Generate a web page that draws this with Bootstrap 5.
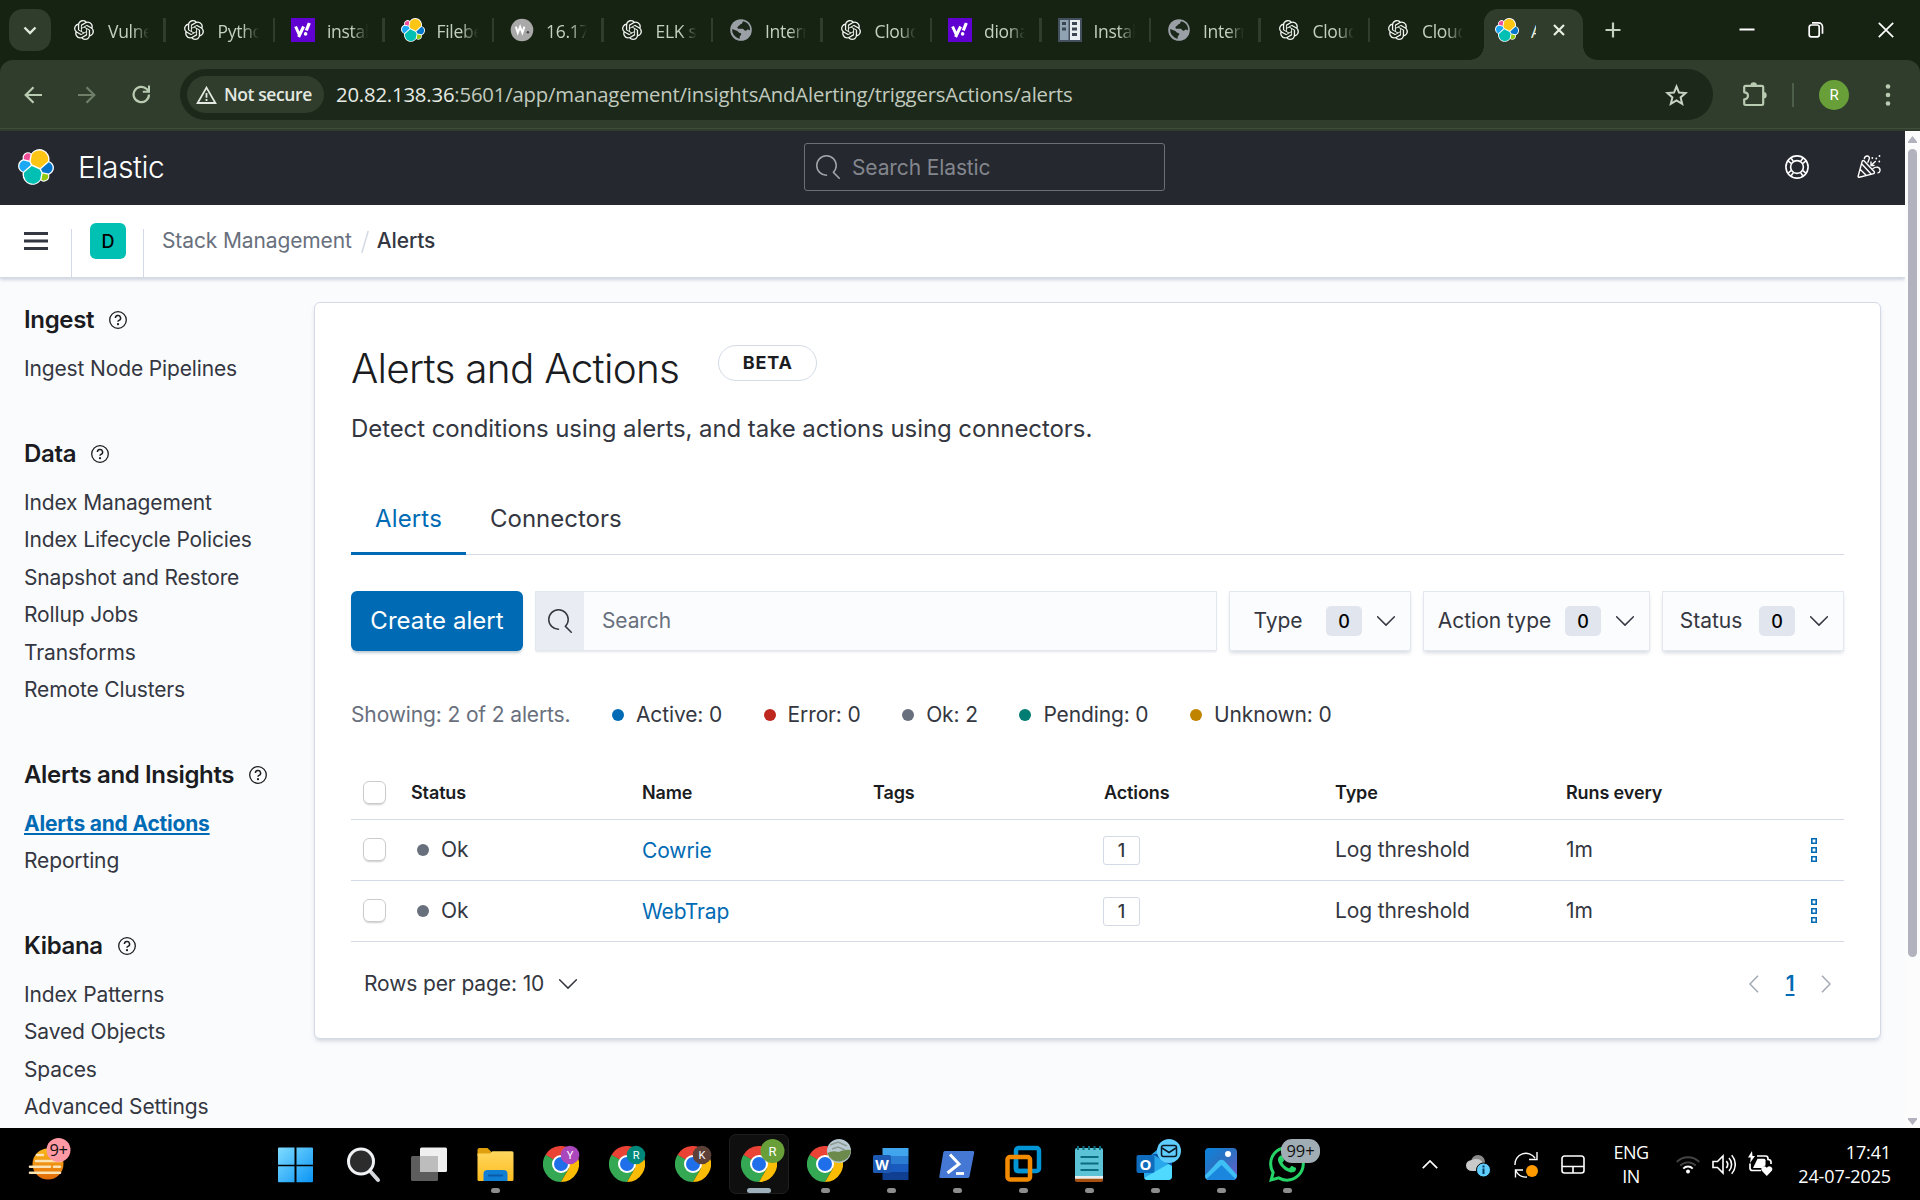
<!DOCTYPE html>
<html lang="en">
<head>
<meta charset="utf-8">
<title>Alerts - Elastic</title>
<link href="https://cdn.jsdelivr.net/npm/bootstrap@5.3.0/dist/css/bootstrap.min.css" rel="stylesheet">
<style>
body{font-family:Inter,sans-serif;font-size:21px;letter-spacing:-.12px;color:#343741;background:#000;width:1920px;height:1200px;overflow:hidden}
svg{display:block;flex:none}
.seg{font-family:"Open Sans","Noto Sans",sans-serif}
/* browser chrome */
.tabstrip{height:60px;background:#162313;padding-left:9px}
.tabmenu{width:42px;height:42px;border-radius:14px;background:#303d2d;margin-right:5px}
.btab{width:109.5px;height:60px;padding-left:16px;gap:12px}
.btab span{width:41px;font-size:17.5px;letter-spacing:-.3px;color:#c3d0bd;white-space:nowrap;overflow:hidden;padding-top:3px;-webkit-mask-image:linear-gradient(90deg,#000 60%,transparent);mask-image:linear-gradient(90deg,#000 60%,transparent)}
.tabsep{width:2.5px;height:24px;background:#303d2d;margin-left:auto}
.fav{width:24px;height:24px}
.atab{position:relative;width:99px;height:51px;margin:9px 0 0 4.5px;border-radius:14px 14px 0 0;background:#303d2d;padding:0 0 9px 11px}
.atab::before,.atab::after{content:"";position:absolute;bottom:0;width:14px;height:14px}
.atab::before{left:-14px;background:radial-gradient(circle at 0 0,transparent 13.5px,#303d2d 14px)}
.atab::after{right:-14px;background:radial-gradient(circle at 100% 0,transparent 13.5px,#303d2d 14px)}
.atab span{width:5px;overflow:hidden;color:#e6efe2;font-size:17.5px;margin-left:12px;padding-top:3px}
.newtab{margin-left:22px}
.wctl{padding-right:26.5px;gap:53.2px}
.toolbar{height:71px;background:#303d2d;border-radius:13px 13px 0 0;box-shadow:inset 0 -2px 0 #303d2d,inset 0 -3px 0 #404d3c;padding:9px 24px 11px}
.chromewrap{background:#162313}
.gap36{margin-left:36px}
.omni{width:1533px;height:51px;border-radius:26px;background:#1c291a;padding:0 25px 0 7px;margin-left:29px}
.chip{width:137px;height:37px;border-radius:19px;background:#303d2d;color:#e3e8e0;padding-left:9px;gap:7px;font-size:17.5px;font-weight:600;letter-spacing:-.4px;white-space:nowrap}
.urltext{font-size:20.3px;color:#c2c9bf;margin-left:12px;white-space:nowrap;letter-spacing:-.17px}
.urltext b{font-weight:400;color:#e7ebe5}
.avatar{width:30px;height:30px;border-radius:50%;background:#689f38;color:#fff;font:400 15px Roboto,sans-serif;margin-left:25px}
.tbsep{width:2px;height:24px;background:#4d5f48;margin-left:25px}
/* page */
.pagearea{height:997px;background:#fafbfd}
.sbar{width:15px;background:#fcfcfd;padding:5px 3px 3px}
.sthumb{width:9px;height:808px;border-radius:5px;background:#b2b2be;margin-top:6px}
.ehead{height:74px;background:#25282f;padding:0 24px 2px 18px}
.brand{font-size:30px;font-weight:300;color:#fff;letter-spacing:-.45px;margin-left:24px;line-height:1}
.esearch{width:361px;height:48px;border:1px solid #6c6f77;border-radius:3px;color:#83868d;padding-left:11px;gap:12px}
.esearch span{padding-top:1px}
.subhead{height:73px;background:#fff;border-bottom:1px solid #d3dae6;box-shadow:0 2px 3px rgba(105,120,150,.28);position:relative;padding-left:24px}
.burger{width:24px;height:18px;margin-right:23px}
.vline{width:1px;height:48px;background:#d3dae6;align-self:flex-end}
.space{width:36px;height:36px;border-radius:6px;background:#00bfb3;color:#000;font-size:18px;font-weight:500;margin:0 17px 0 18px}
.crumbs{margin-left:18px;margin-top:-1px}
.side{width:314px;padding:24px 0 0 24px}
.side h2{font-size:24px;font-weight:600;line-height:36px;letter-spacing:-.35px;color:#1a1c21;margin:0 0 12px;gap:15px}
.side a{display:block;line-height:37.5px;color:#1a1c21;text-decoration:none;letter-spacing:-.14px}
.side a.cur{font-weight:700;letter-spacing:-.2px;color:#006bb4;text-decoration:underline;text-decoration-thickness:2px;text-underline-offset:2px}
.sgroup{margin-bottom:48px}
.panel{width:1567px;height:737px;margin-top:24px;background:#fff;border:1px solid #d3dae6;border-radius:6px;box-shadow:0 3px 4px -1px rgba(105,120,150,.3);padding:36px}
.ttl{font-size:40.5px;font-weight:300;letter-spacing:-.72px;color:#1a1c21;line-height:48px;margin:6px 0 0}
.beta{height:36px;width:99px;border:1px solid #d3dae6;border-radius:18px;font-size:18px;font-weight:700;letter-spacing:.8px;color:#1a1c21;margin:6px 0 0 39px;padding-bottom:1px}
.desc{font-size:24px;line-height:36px;margin:18px 0 0;letter-spacing:-.08px}
.etabs{height:74px;margin-top:34px;border-bottom:1px solid #d3dae6}
.etab{padding:0 24px;font-size:24px;height:74px;line-height:75px;letter-spacing:0}
.etab.on{width:115px;color:#006bb4;border-bottom:3px solid #006bb4;letter-spacing:.15px;white-space:nowrap}
.tools{margin-top:36px;gap:12px}
.create{width:172px;height:60px;border-radius:6px;background:#006bb4;color:#fff;font-size:24px;font-weight:400;padding:0;border:0;letter-spacing:.05px;box-shadow:0 3px 3px -1px rgba(54,97,126,.35)}
.field{height:60px;border:1px solid #e3e7ef;background:#fbfcfd;box-shadow:0 2px 2px -1px rgba(152,162,179,.3)}
.pre{width:48px;height:58px;background:#e9edf3;padding-right:1px}
.fbtn{padding:0 15px 0 12px;gap:12px;box-shadow:0 3px 4px -1px rgba(152,162,179,.4)}
.fbtn .cnt{width:36px;height:30px;border-radius:5px;background:#e0e5ee;color:#000;font-size:18px;font-weight:500;margin-right:3px}
.fbtn .lbl{text-align:center;white-space:nowrap;letter-spacing:0}
.w72{width:72px}.w117{width:117px}.w182{width:182px}.w227{width:227px}
.sums{margin-top:46px;height:36px;gap:41.5px;letter-spacing:-.13px}
.sums>span{gap:12px}
.dot{width:12px;height:12px;border-radius:50%;display:inline-block;flex:none}
.g{background:#69707d}
.tdot{margin:0 12px 0 6px;vertical-align:1px}
.muted2{color:#69707d}
.etable{margin:34px 0 0;width:1493px;table-layout:fixed;border-collapse:collapse;color:#343741}
.etable th{height:52px;font-size:18px;font-weight:600;color:#1a1c21;padding:0 12px;letter-spacing:-.12px}
.etable td{height:61px;padding:0 12px}
.etable tr{border-bottom:1px solid #d3dae6}
.cbx{width:23px;height:23px;border:1px solid #c9cbcd;border-radius:6px;background:#fff;box-shadow:0 2px 2px -1px rgba(0,0,0,.2)}
.etable a{color:#006bb4;text-decoration:none;position:relative;top:1px}
.etable td svg{margin-left:14px}
.abadge{display:inline-flex;width:37px;height:29px;border:1px solid #d3dae6;border-radius:3px;align-items:center;justify-content:center;font-size:18px;font-weight:500;margin-left:-1px;vertical-align:middle}
.foot{margin-top:24px;height:37px;padding:0 13px 0 13px}
.pgnum{font-weight:600;color:#006bb4;text-decoration:underline;text-decoration-thickness:2px;text-underline-offset:3px}
/* taskbar */
.taskbar{height:72px;background:#000;color:#fff}
.slot{width:66px;height:72px;position:relative;flex:none}
.slot>svg{position:absolute;left:0;top:0;overflow:visible}
.run::after{content:"";position:absolute;left:29px;top:60px;width:9px;height:5px;border-radius:3px;background:#8d8d8d}
.act{isolation:isolate}
.act::before{content:"";position:absolute;z-index:-1;left:3px;top:6px;width:60px;height:60px;border-radius:7px;background:#0f0f0f;border:1px solid #1f1f1f}
.act::after{content:"";position:absolute;left:21px;top:60px;width:24px;height:5px;border-radius:3px;background:#9fb0bd}
.traytxt{font-size:18px;line-height:24px;letter-spacing:-.5px}
.clk{width:118px;letter-spacing:-.12px}
</style>
</head>
<body>
<svg width="0" height="0" class="position-absolute">
<defs>
<symbol id="elastic" viewBox="0 0 32 32"><path fill="#fff" d="M32 16.77a6.334 6.334 0 00-1.14-3.63 6.269 6.269 0 00-3.02-2.298 9.098 9.098 0 00-.874-5.965A8.965 8.965 0 0022.556.823a8.872 8.872 0 00-5.936-.358 8.94 8.94 0 00-4.87 3.457 4.777 4.777 0 00-5.72-.07 4.87 4.87 0 00-1.703 2.31 4.917 4.917 0 00-.033 2.88 6.356 6.356 0 00-3.076 2.306A6.423 6.423 0 00.04 15.02c-.002 1.305.396 2.579 1.142 3.647a6.269 6.269 0 003.036 2.302 9.203 9.203 0 00-.163 1.73 9.016 9.016 0 001.7 5.286 8.901 8.901 0 004.466 3.26 8.85 8.85 0 005.515-.01 8.917 8.917 0 004.455-3.276 4.776 4.776 0 005.716.076 4.87 4.87 0 001.702-2.307 4.917 4.917 0 00.036-2.877 6.355 6.355 0 003.077-2.306A6.423 6.423 0 0032 16.77"/><path fill="#fec514" d="M12.58 13.787l7.002 3.211 7.066-6.213a7.849 7.849 0 00.152-1.557c0-1.692-.539-3.34-1.538-4.704a7.897 7.897 0 00-4.02-2.87 7.86 7.86 0 00-4.932.086 7.9 7.9 0 00-3.92 3.007l-1.174 6.118 1.363 2.922z"/><path fill="#00bfb3" d="M5.333 21.215a7.964 7.964 0 001.376 6.322 7.897 7.897 0 004.014 2.924 7.862 7.862 0 004.959-.062 7.9 7.9 0 003.944-3.003l1.163-6.087-1.555-2.996-7.03-3.217-6.871 6.12z"/><path fill="#f04e98" d="M5.288 9.067l4.8 1.137L11.14 4.73a3.785 3.785 0 00-4.538-.023A3.82 3.82 0 005.285 6.6a3.85 3.85 0 00.004 2.467"/><path fill="#1ba9f5" d="M4.872 10.214a5.294 5.294 0 00-2.595 1.882 5.324 5.324 0 00-.142 6.124 5.287 5.287 0 002.505 1.995l6.733-6.101-1.235-2.65-5.266-1.25z"/><path fill="#93c90e" d="M20.873 27.277a3.736 3.736 0 002.285.785 3.783 3.783 0 003.101-1.63 3.812 3.812 0 00.451-3.484l-4.8-1.125-1.037 5.454z"/><path fill="#07c" d="M21.848 20.563l5.28 1.238a5.34 5.34 0 002.622-1.938 5.37 5.37 0 001.013-3.107 5.32 5.32 0 00-.936-3.01 5.283 5.283 0 00-2.475-1.944l-6.904 6.07 1.4 2.69z"/></symbol>
<symbol id="gpt" viewBox="-2.4 -2.4 28.8 28.8"><path fill="#f2f4f1" d="M22.2819 9.8211a5.9847 5.9847 0 0 0-.5157-4.9108 6.0462 6.0462 0 0 0-6.5098-2.9A6.0651 6.0651 0 0 0 4.9807 4.1818a5.9847 5.9847 0 0 0-3.9977 2.9 6.0462 6.0462 0 0 0 .7427 7.0966 5.98 5.98 0 0 0 .511 4.9107 6.051 6.051 0 0 0 6.5146 2.9001A5.9847 5.9847 0 0 0 13.2599 24a6.0557 6.0557 0 0 0 5.7718-4.2058 5.9894 5.9894 0 0 0 3.9977-2.9001 6.0557 6.0557 0 0 0-.7475-7.0729zm-9.022 12.6081a4.4755 4.4755 0 0 1-2.8764-1.0408l.1419-.0804 4.7783-2.7582a.7948.7948 0 0 0 .3927-.6813v-6.7369l2.02 1.1686a.071.071 0 0 1 .038.052v5.5826a4.504 4.504 0 0 1-4.4945 4.4944zm-9.6607-4.1254a4.4708 4.4708 0 0 1-.5346-3.0137l.142.0852 4.783 2.7582a.7712.7712 0 0 0 .7806 0l5.8428-3.3685v2.3324a.0804.0804 0 0 1-.0332.0615L9.74 19.9502a4.4992 4.4992 0 0 1-6.1408-1.6464zM2.3408 7.8956a4.485 4.485 0 0 1 2.3655-1.9728V11.6a.7664.7664 0 0 0 .3879.6765l5.8144 3.3543-2.0201 1.1685a.0757.0757 0 0 1-.071 0l-4.8303-2.7865A4.504 4.504 0 0 1 2.3408 7.872zm16.5963 3.8558L13.1038 8.364 15.1192 7.2a.0757.0757 0 0 1 .071 0l4.8303 2.7913a4.4944 4.4944 0 0 1-.6765 8.1042v-5.6772a.79.79 0 0 0-.407-.667zm2.0107-3.0231l-.142-.0852-4.7735-2.7818a.7759.7759 0 0 0-.7854 0L9.409 9.2297V6.8974a.0662.0662 0 0 1 .0284-.0615l4.8303-2.7866a4.4992 4.4992 0 0 1 6.6802 4.66zM8.3065 12.863l-2.02-1.1638a.0804.0804 0 0 1-.038-.0567V6.0742a4.4992 4.4992 0 0 1 7.3757-3.4537l-.142.0805L8.704 5.459a.7948.7948 0 0 0-.3927.6813zm1.0976-2.3654l2.602-1.4998 2.6069 1.4998v2.9994l-2.5974 1.4997-2.6067-1.4997Z"/></symbol>
<symbol id="yahoo" viewBox="0 0 24 24"><path fill="#6001d2" d="M0 0h24v24H0z"/><g fill="none" stroke="#fff" stroke-width="3"><path d="M4.6 8.500l3.600 8M12.600 8.500L7.600 19"/><path d="M18.300 5l-3 7.500" stroke-width="3.200"/></g><circle cx="14.600" cy="15.900" r="1.800" fill="#fff"/></symbol>
<symbol id="wfav" viewBox="0 0 24 24"><circle cx="12" cy="12" r="11.300" fill="#a9a9a9"/><path d="M5.800 8.600l2 6.200 2.300-6 2.300 6 2-6.200" fill="none" stroke="#fff" stroke-width="2"/><circle cx="17.900" cy="14.300" r="1.300" fill="#4a4a4a"/></symbol>
<symbol id="globe" viewBox="0 0 24 24"><circle cx="12" cy="12" r="10.800" fill="#9aa0a6"/><path fill="#1b2718" d="M14 3.200c-1 1.600-.3 2.300-2 2.900-1.500.5-1.300 1.800-2.800 2.200-1 .3-.9 2-.1 2.500h4.300c1.500 0 1.500 1.800 2.800 2 1.400.2 1.300-1.600 2.800-1.400 1 .1 1.700.6 2 .9.2-2-.3-4-1.400-5.500-1.300-2-3.200-3.200-5.600-3.600zM3.300 11c-.3 2 .2 4 1.200 5.600 1.500 2.300 3.800 3.900 6.200 4.200.1-1.500-.3-2.500.9-3.200 1-.7.9-2.200-.3-2.500-2-.4-1.600-1.400-3-2.200C6.700 12.200 4.800 11.900 3.300 11z"/></symbol>
<symbol id="inst" viewBox="0 0 24 24"><path fill="#44505e" d="M0 0h24v24H0z"/><path fill="#8fa3b3" d="M2 2h8.500v20H2z"/><path fill="#e9eef2" d="M12 2h10v20H12z"/><path fill="#3c4652" d="M4 4h4v3H4zM4 9.500h4v3H4zM14 4h5v3h-5zM14 9.500h5v3h-5zM14 15h5v3h-5z"/></symbol>
<symbol id="mag" viewBox="0 0 16 16"><path fill="currentColor" d="M11.271 11.978l3.872 3.873a.502.502 0 00.708 0 .502.502 0 000-.708l-3.565-3.564c2.380-2.747 2.267-6.923-.342-9.532-2.730-2.730-7.170-2.730-9.898 0-2.728 2.729-2.728 7.170 0 9.900a6.955 6.955 0 004.949 2.050.5.5 0 000-1 5.960 5.960 0 01-4.242-1.757 6.010 6.010 0 010-8.486 6.004 6.004 0 018.484 0 6.010 6.010 0 010 8.486.5.5 0 00.034.738z"/></symbol>
<symbol id="q" viewBox="0 0 18 18"><circle cx="9" cy="9" r="8.300" fill="none" stroke="#1a1c21" stroke-width="1.300"/><path d="M6.400 7.100a2.600 2.500 0 1 1 3.600 2.300q-1 .4-1 1.400" fill="none" stroke="#1a1c21" stroke-width="1.500"/><circle cx="9" cy="13.200" r="1.100" fill="#1a1c21"/></symbol>
<symbol id="chev" viewBox="0 0 18 10"><path d="M.6.800L9 9.100 17.400.800" fill="none" stroke="#343741" stroke-width="1.500" stroke-linecap="round" stroke-linejoin="round"/></symbol>
<symbol id="kebab" viewBox="0 0 6 24"><path d="M.8.800h4.400v4.400H.800zM.8 9.800h4.400v4.400H.800zM.8 18.800h4.400v4.400H.800z" fill="#fff" stroke="#006bb4" stroke-width="1.600"/></symbol>
<symbol id="chrome" viewBox="0 0 36 36"><path fill="#ea4335" d="M18 18L2.400 9A18 18 0 0 1 33.600 9z"/><path fill="#34a853" d="M2.400 9A18 18 0 0 0 18 36L25.800 22.500 18 18z"/><path fill="#34a853" d="M2.400 9l7.800 13.500L18 18z"/><path fill="#fbbc05" d="M33.600 9H18l7.800 13.500L18 36A18 18 0 0 0 33.600 9z"/><circle cx="18" cy="18" r="9" fill="#fff"/><circle cx="18" cy="18" r="7" fill="#1f6feb"/></symbol>
<linearGradient id="gw" x1="0" y1="0" x2="1" y2="1"><stop offset="0" stop-color="#7fdcff"/><stop offset="1" stop-color="#0a94f5"/></linearGradient>
<linearGradient id="gf" x1="0" y1="0" x2="0" y2="1"><stop offset="0" stop-color="#ffd75e"/><stop offset="1" stop-color="#fdbd1f"/></linearGradient>
<linearGradient id="gs" x1="0" y1="0" x2="0" y2="1"><stop offset="0" stop-color="#fbb91a"/><stop offset="1" stop-color="#e26a09"/></linearGradient>
<linearGradient id="gp" x1="0" y1="0" x2="1" y2="1"><stop offset="0" stop-color="#0a84dc"/><stop offset=".5" stop-color="#2f6fc0"/><stop offset="1" stop-color="#6d5bd0"/></linearGradient>
</defs>
</svg>

<div class="chromewrap seg">
<div class="tabstrip d-flex align-items-center">
<div class="tabmenu d-flex align-items-center justify-content-center"><svg width="14" height="9" viewBox="0 0 14 9"><path d="M1.500 1.500L7 7l5.500-5.500" fill="none" stroke="#dfe8db" stroke-width="2.400"/></svg></div>
<div class="btab d-flex align-items-center"><svg class="fav"><use href="#gpt"/></svg><span>Vulne</span><i class="tabsep"></i></div>
<div class="btab d-flex align-items-center"><svg class="fav"><use href="#gpt"/></svg><span>Pytho</span><i class="tabsep"></i></div>
<div class="btab d-flex align-items-center"><svg class="fav"><use href="#yahoo"/></svg><span>instal</span><i class="tabsep"></i></div>
<div class="btab d-flex align-items-center"><svg class="fav"><use href="#elastic"/></svg><span>Filebe</span><i class="tabsep"></i></div>
<div class="btab d-flex align-items-center"><svg class="fav"><use href="#wfav"/></svg><span>16.17</span><i class="tabsep"></i></div>
<div class="btab d-flex align-items-center"><svg class="fav"><use href="#gpt"/></svg><span>ELK s</span><i class="tabsep"></i></div>
<div class="btab d-flex align-items-center"><svg class="fav"><use href="#globe"/></svg><span>Intern</span><i class="tabsep"></i></div>
<div class="btab d-flex align-items-center"><svg class="fav"><use href="#gpt"/></svg><span>Cloud</span><i class="tabsep"></i></div>
<div class="btab d-flex align-items-center"><svg class="fav"><use href="#yahoo"/></svg><span>diona</span><i class="tabsep"></i></div>
<div class="btab d-flex align-items-center"><svg class="fav"><use href="#inst"/></svg><span>Install</span><i class="tabsep"></i></div>
<div class="btab d-flex align-items-center"><svg class="fav"><use href="#globe"/></svg><span>Intern</span><i class="tabsep"></i></div>
<div class="btab d-flex align-items-center"><svg class="fav"><use href="#gpt"/></svg><span>Cloud</span><i class="tabsep"></i></div>
<div class="btab d-flex align-items-center"><svg class="fav"><use href="#gpt"/></svg><span>Cloud</span></div>
<div class="atab d-flex align-items-center"><svg class="fav"><use href="#elastic"/></svg><span>A</span><svg width="14" height="14" class="ms-3" viewBox="0 0 14 14"><path d="M2 2l10 10M12 2L2 12" stroke="#e6efe2" stroke-width="2.200"/></svg></div>
<svg class="newtab" width="16" height="16" viewBox="0 0 16 16"><path d="M8 .5v15M.5 8h15" stroke="#c3d0bd" stroke-width="2.200"/></svg>
<div class="wctl d-flex align-items-center ms-auto">
<svg width="16" height="16" viewBox="0 0 16 16"><path d="M.5 7.500h15" stroke="#fff" stroke-width="2"/></svg>
<svg width="16" height="16" viewBox="0 0 16 16"><path d="M1.200 5a2 2 0 0 1 2-2h6a2 2 0 0 1 2 2v7.800a2 2 0 0 1-2 2h-6a2 2 0 0 1-2-2zM4 .9H10.500a4 4 0 0 1 4 4v6.800" fill="none" stroke="#fff" stroke-width="1.700"/></svg>
<svg width="16" height="16" viewBox="0 0 16 16"><path d="M.8.800l14.400 14.400M15.200.800L.800 15.200" stroke="#fff" stroke-width="1.700"/></svg>
</div>
</div>
<div class="toolbar d-flex align-items-center">
<svg width="18" height="18" viewBox="0 0 18 18"><path d="M18 9H1.800M9.500 1.200L1.700 9l7.800 7.800" fill="none" stroke="#b9ccb1" stroke-width="2.200"/></svg>
<svg class="gap36" width="18" height="18" viewBox="0 0 18 18"><path d="M0 9h16.200M8.500 1.200L16.300 9l-7.800 7.800" fill="none" stroke="#6f7f69" stroke-width="2.200"/></svg>
<svg class="gap36" width="19" height="19" viewBox="0 0 19 19"><path d="M17 9.500a7.700 7.700 0 1 1-2.300-5.500l2.300 2.600" fill="none" stroke="#b9ccb1" stroke-width="2.200"/><path d="M18 .5v7.200h-7.200V5.700H16V.5z" fill="#b9ccb1"/></svg>
<div class="omni d-flex align-items-center">
<div class="chip d-flex align-items-center"><svg width="21" height="18" viewBox="0 0 21 18"><path d="M10.500 1.600L19.400 17H1.600z" fill="none" stroke="#e3e8e0" stroke-width="1.800"/><path d="M10.500 7v4.800M10.500 13v1.900" stroke="#e3e8e0" stroke-width="1.800"/></svg><span>Not secure</span></div>
<div class="urltext"><b>20.82.138.36</b>:5601/app/management/insightsAndAlerting/triggersActions/alerts</div>
<svg class="ms-auto" width="23" height="22" viewBox="0 0 23 22"><path d="M11.500 2.500l2.500 6.100 6.600.5-5 4.300 1.600 6.400-5.700-3.500-5.700 3.500 1.600-6.400-5-4.300 6.600-.5z" fill="none" stroke="#c9d3c5" stroke-width="2"/></svg>
</div>
<svg style="margin-left:29px" width="25" height="25" viewBox="0 0 25 25"><path d="M2.200 5.200q0-1.400 1.400-1.400h16.200q1.400 0 1.400 1.400v16.400q0 1.400-1.400 1.400H3.600q-1.400 0-1.400-1.400v-4.300c5 0 5-7 0-7z" fill="none" stroke="#b9ccb1" stroke-width="2.200" stroke-linejoin="round"/><path d="M8.500 3.500a3.200 3.200 0 0 1 6.400 0zM21.500 10a3.200 3.200 0 0 1 0 6.400z" fill="#b9ccb1"/></svg>
<i class="tbsep"></i>
<div class="avatar d-flex align-items-center justify-content-center">R</div>
<svg class="gap36" width="6" height="22" viewBox="0 0 6 22"><g fill="#b9ccb1"><circle cx="3" cy="2.500" r="2.300"/><circle cx="3" cy="11" r="2.300"/><circle cx="3" cy="19.500" r="2.300"/></g></svg>
</div>
</div>

<div class="pagearea d-flex">
<div class="flex-grow-1 overflow-hidden">
<header class="ehead d-flex align-items-center justify-content-between">
<div class="d-flex align-items-center" style="width:786px"><svg width="36" height="36"><use href="#elastic"/></svg><span class="brand">Elastic</span></div>
<div class="esearch d-flex align-items-center"><svg width="24" height="24" style="color:#a4a6ab"><use href="#mag"/></svg><span>Search Elastic</span></div>
<div class="d-flex align-items-center justify-content-end" style="width:716px;gap:48px">
<svg width="24" height="24" viewBox="0 0 24 24" fill="none" stroke="#fff"><circle cx="12" cy="12" r="11.100" stroke-width="1.600"/><circle cx="12" cy="12" r="6.400" stroke-width="1.600"/><path d="M8.300 6.400L6.200 3.200M6.200 8.300L3.300 6.100M15.700 6.400l2.100-3.200M17.800 8.300l2.900-2.200M8.300 17.600l-2.100 3.200M6.200 15.700l-2.900 2.200M15.700 17.600l2.100 3.200M17.800 15.700l2.900 2.200" stroke-width="1.600"/></svg>
<svg width="24" height="24" viewBox="0 0 24 24" fill="none" stroke="#fff" stroke-width="1.400" stroke-linejoin="round" stroke-linecap="round"><path d="M7 5.800L17.300 16.800Q18 18.300 15.800 18.900L2.200 22.300Q.9 22.300 1.200 21L5 6.900Q5.600 5 7 5.800zM3.300 14.500l5.800 5.800M5.300 9.500l8.500 9.300"/><path d="M7.300 3.500Q8 .9 10.300 1q3 .5 1.600 3.800l-1 2.400M14 10.500L18.300 6.500M14 10.200V7M14 10.500h3M16 13.500q2.500-1.800 4.500-1.300 2.800.8 2.500 3.500-.3 2-2 2.200"/><path d="M15.300 3v.1M19.300 3.500v.1M22.500 1v.1M22.300 6.500v.1" stroke-width="1.800"/></svg>
</div>
</header>
<div class="subhead d-flex align-items-center">
<svg class="burger" viewBox="0 0 24 18"><path d="M0 1.500h24M0 9h24M0 16.500h24" stroke="#343741" stroke-width="2.800"/></svg>
<i class="vline"></i><div class="space d-flex align-items-center justify-content-center">D</div><i class="vline"></i>
<div class="crumbs d-flex align-items-center"><span class="muted2">Stack Management</span><svg width="8" height="24" viewBox="0 0 8 24" style="margin:3px 8px 0 9px"><path d="M7.200 1L.8 23" stroke="#d3dae6" stroke-width="1.500"/></svg><span class="fw-medium" style="font-weight:500">Alerts</span></div>
</div>
<div class="d-flex">
<nav class="side">
<div class="sgroup"><h2 class="d-flex align-items-center">Ingest<svg width="18" height="18"><use href="#q"/></svg></h2><a>Ingest Node Pipelines</a></div>
<div class="sgroup"><h2 class="d-flex align-items-center">Data<svg width="18" height="18"><use href="#q"/></svg></h2><a>Index Management</a><a>Index Lifecycle Policies</a><a>Snapshot and Restore</a><a>Rollup Jobs</a><a>Transforms</a><a>Remote Clusters</a></div>
<div class="sgroup"><h2 class="d-flex align-items-center">Alerts and Insights<svg width="18" height="18"><use href="#q"/></svg></h2><a class="cur">Alerts and Actions</a><a>Reporting</a></div>
<div class="sgroup mb-0"><h2 class="d-flex align-items-center">Kibana<svg width="18" height="18"><use href="#q"/></svg></h2><a>Index Patterns</a><a>Saved Objects</a><a>Spaces</a><a>Advanced Settings</a></div>
</nav>
<main class="panel">
<div class="d-flex align-items-start"><h1 class="ttl">Alerts and Actions</h1><div class="beta d-flex align-items-center justify-content-center">BETA</div></div>
<p class="desc">Detect conditions using alerts, and take actions using connectors.</p>
<div class="etabs d-flex"><div class="etab on">Alerts</div><div class="etab">Connectors</div></div>
<div class="tools d-flex">
<button class="create btn">Create alert</button>
<div class="field d-flex align-items-center flex-grow-1"><div class="pre d-flex align-items-center justify-content-center"><svg width="24" height="24"><use href="#mag"/></svg></div><span class="muted2" style="margin-left:18px">Search</span></div>
<div class="field fbtn w182 d-flex align-items-center"><span class="lbl w72">Type</span><span class="cnt d-flex align-items-center justify-content-center">0</span><svg width="18" height="10"><use href="#chev"/></svg></div>
<div class="field fbtn w227 d-flex align-items-center"><span class="lbl w117">Action type</span><span class="cnt d-flex align-items-center justify-content-center">0</span><svg width="18" height="10"><use href="#chev"/></svg></div>
<div class="field fbtn w182 d-flex align-items-center"><span class="lbl w72">Status</span><span class="cnt d-flex align-items-center justify-content-center">0</span><svg width="18" height="10"><use href="#chev"/></svg></div>
</div>
<div class="sums d-flex align-items-center">
<span class="muted2">Showing: 2 of 2 alerts.</span>
<span class="d-flex align-items-center"><i class="dot" style="background:#006bb4"></i>Active: 0</span>
<span class="d-flex align-items-center"><i class="dot" style="background:#bd271e"></i>Error: 0</span>
<span class="d-flex align-items-center"><i class="dot g"></i>Ok: 2</span>
<span class="d-flex align-items-center"><i class="dot" style="background:#017d73"></i>Pending: 0</span>
<span class="d-flex align-items-center"><i class="dot" style="background:#c08400"></i>Unknown: 0</span>
</div>
<table class="etable">
<colgroup><col style="width:48px"><col style="width:231px"><col style="width:231px"><col style="width:231px"><col style="width:231px"><col style="width:231px"><col style="width:231px"><col></colgroup>
<tr><th><div class="cbx"></div></th><th>Status</th><th>Name</th><th>Tags</th><th>Actions</th><th>Type</th><th>Runs every</th><th></th></tr>
<tr><td><div class="cbx"></div></td><td><i class="dot g tdot"></i>Ok</td><td><a href="#">Cowrie</a></td><td></td><td><span class="abadge">1</span></td><td>Log threshold</td><td>1m</td><td><svg width="6" height="24"><use href="#kebab"/></svg></td></tr>
<tr><td><div class="cbx"></div></td><td><i class="dot g tdot"></i>Ok</td><td><a href="#">WebTrap</a></td><td></td><td><span class="abadge">1</span></td><td>Log threshold</td><td>1m</td><td><svg width="6" height="24"><use href="#kebab"/></svg></td></tr>
</table>
<div class="foot d-flex align-items-center justify-content-between"><div class="d-flex align-items-center" style="gap:15px">Rows per page: 10<svg width="18" height="10"><use href="#chev"/></svg></div>
<div class="d-flex align-items-center" style="gap:26.5px"><svg width="10" height="18" viewBox="0 0 10 18"><path d="M9 .8L1 9l8 8.200" fill="none" stroke="#a2a8b4" stroke-width="1.500"/></svg><span class="pgnum">1</span><svg width="10" height="18" viewBox="0 0 10 18"><path d="M1 .8L9 9l-8 8.200" fill="none" stroke="#a2a8b4" stroke-width="1.500"/></svg></div></div>
</main>
</div>
</div>
<div class="sbar d-flex flex-column align-items-center"><svg width="9" height="7" viewBox="0 0 9 7"><path d="M4.500 0L9 5.500V7H0V5.500z" fill="#b2b2be"/></svg><div class="sthumb"></div><svg class="mt-auto" width="9" height="7" viewBox="0 0 9 7"><path d="M4.500 7L9 1.500V0H0v1.500z" fill="#b2b2be"/></svg></div>
</div>

<footer class="taskbar d-flex seg">
<div class="slot" style="width:264px"><svg width="90" height="72"><circle cx="48" cy="36" r="15.500" fill="url(#gs)"/><path d="M37 27h6M36 33h25M30 38.800h20M54 38.800h6M30 44.800h30" stroke="#fbe3b4" stroke-width="2.600" stroke-linecap="round"/><circle cx="58.500" cy="22" r="12" fill="#ff99a4"/><text x="58.500" y="27.500" font-size="16.500" text-anchor="middle" fill="#111" letter-spacing="-.5">9+</text></svg></div>
<div class="slot"><svg width="66" height="72"><path fill="url(#gw)" transform="translate(-1.500)" d="M15.500 20.500q0-1 1-1h15.500v17.200H15.500zM34 19.500h15.500q1 0 1 1v16.200H34zM15.500 38.200H32V54.200H16.500q-1 0-1-1zM34 38.200h16.500v15q0 1-1 1H34z"/></svg></div>
<div class="slot"><svg width="66" height="72"><path d="M40.500 43.500L48 52" stroke="#d5d8dc" stroke-width="4" stroke-linecap="round"/><circle cx="31" cy="33.500" r="12.500" fill="#2c2c2c" stroke="#f1f2f3" stroke-width="3"/></svg></div>
<div class="slot"><svg width="66" height="72"><rect x="15" y="28" width="27" height="25" rx="1.500" fill="#5d5d5d"/><rect x="24" y="19.500" width="27" height="24.500" rx="1.500" fill="#f0f0f0"/><path d="M24 28h18v16H24z" fill="#bdbdbd"/></svg></div>
<div class="slot run"><svg width="66" height="72"><path d="M15.500 22q0-2 2-2h8l4 4-4 4h-10z" fill="#e09f0c"/><path d="M15.500 25.500h12l3-2.200h19.500q1.500 0 1.500 1.500V51.500q0 1.500-1.500 1.500H17q-1.500 0-1.500-1.500z" fill="url(#gf)"/><path d="M21.500 53V46q0-4 4-4h16q4 0 4 4v7z" fill="#0f7fd6"/><path d="M26 47.500h15" stroke="#0a5aa8" stroke-width="2"/></svg></div>
<div class="slot"><svg width="66" height="72"><use href="#chrome" x="15" y="18" width="36" height="36"/><circle cx="42" cy="27" r="9.300" fill="#ab47bc"/><text x="42" y="31" font-size="11" font-family="Roboto" text-anchor="middle" fill="#fff">Y</text></svg></div>
<div class="slot"><svg width="66" height="72"><use href="#chrome" x="15" y="18" width="36" height="36"/><circle cx="42" cy="27" r="9.300" fill="#00897b"/><text x="42" y="31" font-size="11" font-family="Roboto" text-anchor="middle" fill="#fff">R</text></svg></div>
<div class="slot"><svg width="66" height="72"><use href="#chrome" x="15" y="18" width="36" height="36"/><circle cx="42" cy="27" r="9.300" fill="#5d4037"/><text x="42" y="31" font-size="11" font-family="Roboto" text-anchor="middle" fill="#fff">K</text></svg></div>
<div class="slot act"><svg width="66" height="72"><use href="#chrome" x="15" y="18" width="36" height="36"/><circle cx="46.500" cy="23" r="12" fill="#689f38"/><text x="46.500" y="27.500" font-size="13" font-family="Roboto" text-anchor="middle" fill="#fff">R</text></svg></div>
<div class="slot run"><svg width="66" height="72"><use href="#chrome" x="15" y="18" width="36" height="36"/><circle cx="47" cy="23" r="12" fill="#b9c9d2"/><path d="M35.500 25q5-3 11-1 6-3 12.500-2a12 12 0 0 1-23.500 3z" fill="#6d8a4d"/><path d="M38 17l8-3 9 4M40 21l6-2 7 3" stroke="#8f9a93" stroke-width="1.500" fill="none"/></svg></div>
<div class="slot run"><svg width="66" height="72"><path d="M24.500 20h26v8h-26z" fill="#41a5ee"/><path d="M24.500 28h26v8h-26z" fill="#2b7cd3"/><path d="M24.500 36h26v8h-26z" fill="#185abd"/><path d="M24.500 44h26v8h-26z" fill="#103f91"/><rect x="15" y="27" width="18" height="18" rx="1.500" fill="#1d59b3"/><text x="24" y="41.500" font-size="14" font-weight="700" text-anchor="middle" fill="#fff">W</text></svg></div>
<div class="slot run"><svg width="66" height="72"><path d="M20.500 23h28.500q1.500 0 1.200 1.500l-4.700 24q-.3 1.500-1.800 1.500H16.500q-1.500 0-1.200-1.500l4-24q.3-1.500 1.500-1.500z" fill="#4478d4"/><path d="M26 26.500l9 9.500-11.500 9" stroke="#fff" stroke-width="3" fill="none"/><path d="M32 45.500h8" stroke="#fff" stroke-width="2.800"/></svg></div>
<div class="slot run"><svg width="66" height="72"><rect x="26" y="20" width="23" height="23" rx="2.500" fill="none" stroke="#0095d5" stroke-width="4.500"/><rect x="17.500" y="29" width="22.500" height="22.500" rx="2.500" fill="none" stroke="#f38b00" stroke-width="4.500"/><path d="M26 33v8q0 2 2 2h9" fill="none" stroke="#0095d5" stroke-width="4.500"/></svg></div>
<div class="slot run"><svg width="66" height="72"><rect x="19" y="20" width="28" height="33.500" rx="2" fill="#5cc3d6"/><path d="M19 48h28v3.500H19z" fill="#e8eef0"/><path d="M19 50.800h28v1.200q0 2-2 2H21q-2 0-2-2z" fill="#a8500f"/><path d="M22 18v4M27.500 18v4M33 18v4M38.500 18v4M44 18v4" stroke="#0a6f80" stroke-width="2"/><path d="M24.500 29h18M24.500 35.500h18M24.500 42h18" stroke="#0b6c80" stroke-width="2.200"/></svg></div>
<div class="slot run"><svg width="66" height="72"><path d="M22 33L36 21l14 12v15q0 4-4 4H26q-4 0-4-4z" fill="#28a8ea"/><path d="M22 50L50 34v14q0 4-4 4H24z" fill="#50d9ff"/><path d="M30 26l20 12V26z" fill="#0a4fa0"/><rect x="14.500" y="27" width="18" height="18" rx="2" fill="#0f6cbd"/><text x="23.500" y="41.500" font-size="15" font-weight="700" text-anchor="middle" fill="#fff">O</text><circle cx="47" cy="23" r="12" fill="#60cdff"/><rect x="39.500" y="17.500" width="15" height="11" rx="2" fill="none" stroke="#0b1a24" stroke-width="1.500"/><path d="M40 20l7 4.500 7-4.500" fill="none" stroke="#0b1a24" stroke-width="1.500"/></svg></div>
<div class="slot run"><svg width="66" height="72"><rect x="17" y="20" width="32" height="32" rx="4" fill="url(#gp)"/><path d="M17 47.500L30.500 33q3-2.500 6 0L49 47q-.5 5-5 5H22q-5 0-5-4.500z" fill="#3fc0f5"/><path d="M18.500 51L33.500 37 47.500 51q-1.500 1-3.500 1H22q-2 0-3.500-1z" fill="#1a86de"/><circle cx="40" cy="26" r="3" fill="#fff"/></svg></div>
<div class="slot run"><svg width="80" height="72"><g transform="translate(15 18) scale(2.250)" fill="#25d366"><path d="M13.601 2.326A7.850 7.850 0 0 0 7.994 0C3.627 0 .068 3.558.064 7.926c0 1.399.366 2.760 1.057 3.965L0 16l4.204-1.102a7.900 7.900 0 0 0 3.790.965h.004c4.368 0 7.926-3.558 7.930-7.930A7.900 7.900 0 0 0 13.600 2.326zM7.994 14.521a6.600 6.600 0 0 1-3.356-.92l-.24-.144-2.494.654.666-2.433-.156-.251a6.560 6.560 0 0 1-1.007-3.505c0-3.626 2.957-6.584 6.591-6.584a6.560 6.560 0 0 1 4.660 1.931 6.560 6.560 0 0 1 1.928 4.660c-.004 3.639-2.961 6.592-6.592 6.592m3.615-4.934c-.197-.099-1.170-.578-1.353-.646-.182-.065-.315-.099-.445.099-.133.197-.513.646-.627.775-.114.133-.232.148-.43.050-.197-.1-.836-.308-1.592-.985-.59-.525-.985-1.175-1.103-1.372-.114-.198-.011-.304.088-.403.087-.088.197-.232.296-.346.1-.114.133-.198.198-.33.065-.134.034-.248-.015-.347-.05-.099-.445-1.076-.612-1.470-.16-.389-.323-.335-.445-.340-.114-.007-.247-.007-.380-.007a.73.73 0 0 0-.529.247c-.182.198-.691.677-.691 1.654s.710 1.916.810 2.049c.098.133 1.394 2.132 3.383 2.992.470.205.840.326 1.129.418.475.152.904.129 1.246.080.380-.058 1.171-.480 1.338-.943.164-.464.164-.860.114-.943-.049-.084-.182-.133-.380-.232"/></g><rect x="27" y="11" width="39" height="24" rx="11" fill="#a0adb5"/><text x="46.500" y="28.800" font-size="16.500" text-anchor="middle" fill="#111">99+</text></svg></div>
<div class="d-flex align-items-center ms-auto" style="padding-right:29px">
<svg width="16" height="9" viewBox="0 0 16 9"><path d="M.8 8.200L8 1l7.200 7.200" fill="none" stroke="#fff" stroke-width="1.700"/></svg>
<svg width="25" height="24" viewBox="0 0 25 24" style="margin-left:28px;margin-top:4px"><circle cx="12" cy="8" r="7" fill="#8a8a8a"/><path d="M6 17a6 5.500 0 0 1 0-11 7 6 0 0 1 11 4v7z" fill="#c9c9c9"/><circle cx="17.500" cy="16" r="7" fill="#60cdff" stroke="#000" stroke-width="1"/><path d="M17.500 14.500v5.500M17.500 11.500v2" stroke="#003a5c" stroke-width="2"/></svg>
<svg width="24" height="27" viewBox="0 0 24 27" style="margin-left:23px"><path d="M1 14A11 11 0 0 1 21 7M23 1v7.500h-8M1.500 26.500V19h7.500M2 20a11 11 0 0 0 11 6" fill="none" stroke="#fff" stroke-width="1.400"/><circle cx="18" cy="20" r="6" fill="#ff9a00"/></svg>
<svg width="24" height="19" viewBox="0 0 24 19" style="margin-left:23px"><path d="M3.500 1h17a2.500 2.500 0 0 1 2.500 2.500v12a2.500 2.500 0 0 1-2.500 2.500h-17A2.500 2.500 0 0 1 1 15.500v-12A2.500 2.500 0 0 1 3.500 1zM1 11.500h22M12 11.500V18" fill="none" stroke="#fff" stroke-width="1.600"/></svg>
<div class="traytxt text-center" style="width:70px;margin-left:11px">ENG<br>IN</div>
<svg width="24" height="20" viewBox="0 0 24 20" style="margin-left:10px" fill="none" stroke-width="1.800"><path d="M.8 8a15.600 15.600 0 0 1 22.400 0M4.200 11.600a11 11 0 0 1 15.600 0" stroke="#444"/><path d="M7.300 14.600a6.500 6.500 0 0 1 9.400 0" stroke="#fff" stroke-width="2"/><circle cx="12" cy="17.500" r="2" fill="#fff"/></svg>
<svg width="24" height="21" viewBox="0 0 24 21" style="margin-left:12px" fill="none" stroke="#fff" stroke-width="1.600"><path d="M1 7.500h4.500L11 2v17l-5.500-5.500H1zM14.300 7a5.500 5.500 0 0 1 0 7M17 4a9.500 9.500 0 0 1 0 13M19.700 1.200a14 14 0 0 1 0 18.600"/></svg>
<svg width="25" height="26" viewBox="0 0 25 26" style="margin-left:12px"><path d="M9 5h8.500q2.500 0 2.500 2.500v1q3 0 3 2.500v2M2 12.500V17q0 2.500 2.500 2.500H13" fill="none" stroke="#fff" stroke-width="1.700"/><path d="M9.500 7.800H16q1.500 0 1.500 1.500v5L14 17H5z" fill="#fff"/><path d="M4 0L0 6.500h2.800L2 12l5-7H4.500z" fill="#fff"/><path d="M18.800 25l-5-5.300a2.900 2.900 0 0 1 5-3 2.900 2.900 0 0 1 5 3z" fill="#fff"/></svg>
<div class="traytxt clk text-end">17:41<br>24-07-2025</div>
</div>
</footer>
<script src="https://cdn.jsdelivr.net/npm/bootstrap@5.3.0/dist/js/bootstrap.bundle.min.js"></script>
</body>
</html>
